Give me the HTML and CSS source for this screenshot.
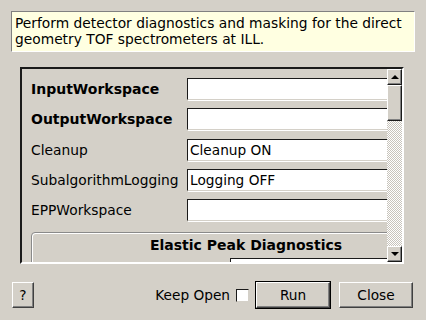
FILE: index.html
```html
<!DOCTYPE html>
<html>
<head>
  <meta charset="utf-8">
  <meta name="viewport" content="width=device-width">
  <title>Algorithm dialog</title>
  <link rel="stylesheet" href="styles.css">
</head>
<body>

    <div class="dialog">
        <div class="desc">Perform detector diagnostics and masking for the direct<br>geometry TOF spectrometers at ILL.</div>

        <div class="scroll_frame">
            <div class="props">
                <div class="row">
                    <span class="label bold">InputWorkspace</span>
                    <div class="field"></div>
                </div>
                <div class="row">
                    <span class="label bold">OutputWorkspace</span>
                    <div class="field"></div>
                </div>
                <div class="row">
                    <span class="label">Cleanup</span>
                    <div class="field">Cleanup ON</div>
                </div>
                <div class="row">
                    <span class="label">SubalgorithmLogging</span>
                    <div class="field">Logging OFF</div>
                </div>
                <div class="row">
                    <span class="label">EPPWorkspace</span>
                    <div class="field"></div>
                </div>
                <div class="group">
                    <div class="group_title">Elastic Peak Diagnostics</div>
                    <div class="group_row">
                        <div class="field"></div>
                    </div>
                </div>
            </div>
            <div class="scrollbar">
                <div class="arrow up"><span class="tri"></span></div>
                <div class="thumb"></div>
                <div class="trough"></div>
                <div class="arrow down"><span class="tri"></span></div>
            </div>
        </div>

        <div class="buttons">
            <div class="btn help">?</div>
            <div class="keep">
                <span>Keep Open</span>
                <span class="check"></span>
            </div>
            <div class="default_btn"><div class="btn run">Run</div></div>
            <div class="btn close">Close</div>
        </div>
    </div>

</body>
</html>
```

FILE: styles.css
```css
body{
    margin: 0;
    background-color: #d4d0c8;
    font-family: "DejaVu Sans", sans-serif;
    font-size: 13.7px;
    color: #000;
}

.dialog{
    width: 426px;
    height: 320px;
    overflow: hidden;
}

.desc{
    margin: 11px 11px 0 11px;
    width: 396px;
    padding: 3px 3px 4px 3px;
    line-height: 16px;
    font-size: 13.8px;
    white-space: nowrap;
    background-color: #ffffe1;
    border: 1px solid;
    border-color: #808080 #ffffff #ffffff #808080;
}

.scroll_frame{
    margin: 15px 0 0 20px;
    width: 380px;
    height: 193px;
    border: 2px solid;
    border-color: #1a1a1a #ffffff #ffffff #1a1a1a;
    display: flex;
    flex-direction: row;
}

.props{
    flex: 1;
    overflow: hidden;
    padding: 9px 0 0 9px;
    display: flex;
    flex-direction: column;
    gap: 8.3px;
}

.row{
    display: flex;
    flex-direction: row;
    align-items: center;
    height: 22px;
    flex-shrink: 0;
}

.label{
    width: 156px;
    flex-shrink: 0;
    white-space: nowrap;
    font-size: 13.8px;
}

.bold{
    font-weight: bold;
    font-size: 14px;
}

.field{
    width: 210px;
    height: 20px;
    flex-shrink: 0;
    background-color: #fff;
    border: 1px solid;
    border-color: #1a1a1a #d4d0c8 #d4d0c8 #1a1a1a;
    box-shadow: 1px 1px 0 #ffffff;
    padding-left: 2px;
    line-height: 20px;
    white-space: nowrap;
}

.group{
    margin-top: 3px;
    width: 428px;
    height: 60px;
    flex-shrink: 0;
    border: 1px solid #8a8a8a;
    border-radius: 4px;
    box-shadow: inset 1px 1px 0 #ffffff;
}

.group_title{
    font-weight: bold;
    font-size: 14px;
    text-align: center;
    padding-top: 4px;
    line-height: 16px;
}

.group_row{
    padding: 5px 0 0 198px;
}

.scrollbar{
    width: 15px;
    display: flex;
    flex-direction: column;
}

.arrow, .thumb{
    background-color: #d4d0c8;
    border: 1px solid;
    border-color: #ffffff #1a1a1a #1a1a1a #ffffff;
    box-shadow: inset -1px -1px 0 #808080;
    box-sizing: border-box;
}

.arrow{
    height: 16px;
    display: flex;
    align-items: center;
    justify-content: center;
}

.tri{
    width: 0;
    height: 0;
    border-left: 4px solid transparent;
    border-right: 4px solid transparent;
}

.up .tri{
    border-bottom: 4px solid #000;
}

.down .tri{
    border-top: 4px solid #000;
}

.thumb{
    height: 36px;
}

.trough{
    flex: 1;
    background: repeating-conic-gradient(#ffffff 0 25%, #c8c4bc 0 50%) 0 0 / 2px 2px;
}

.buttons{
    margin-top: 17px;
    padding: 0 13px 0 12px;
    display: flex;
    flex-direction: row;
    align-items: center;
}

.btn{
    height: 26px;
    box-sizing: border-box;
    border: 1px solid;
    border-color: #ffffff #404040 #404040 #ffffff;
    box-shadow: inset -1px -1px 0 #808080;
    display: flex;
    align-items: center;
    justify-content: center;
}

.help{
    width: 22px;
}

.keep{
    margin-left: auto;
    display: flex;
    align-items: center;
    gap: 6px;
}

.check{
    width: 13px;
    height: 13px;
    box-sizing: border-box;
    background-color: #fff;
    border: 1px solid;
    border-color: #1a1a1a #d4d0c8 #d4d0c8 #1a1a1a;
}

.default_btn{
    margin-left: 6px;
    border: 1px solid #000;
}

.run{
    width: 74px;
}

.close{
    margin-left: 8px;
    width: 74px;
}
```
